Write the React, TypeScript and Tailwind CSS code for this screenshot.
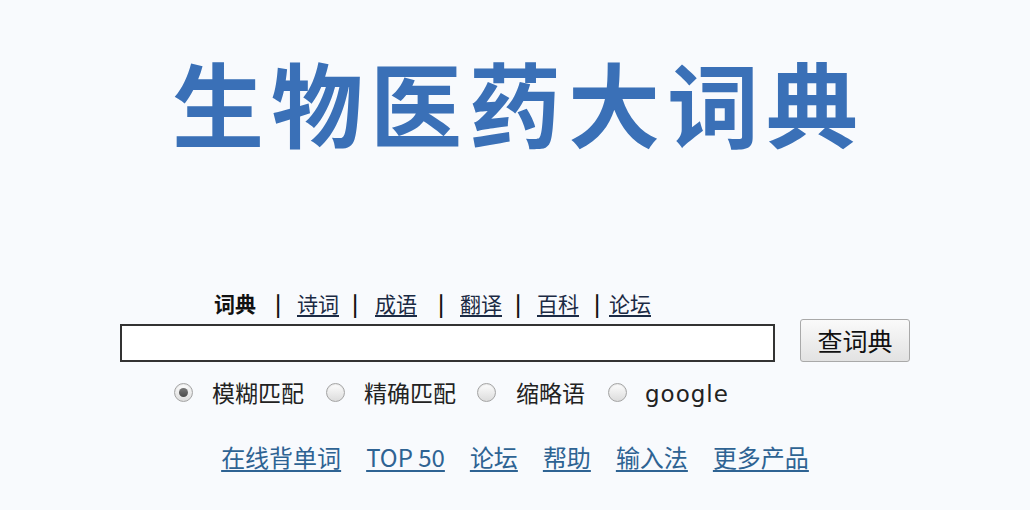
import React from "react";

const cjk = { fontFamily: '"Noto Sans CJK SC", "Noto Sans", sans-serif' };

function Radio({ checked }: { checked?: boolean }) {
  return (
    <span className="flex h-[19px] w-[19px] shrink-0 items-center justify-center rounded-full border border-[#a4a4a4] bg-gradient-to-b from-[#fdfdfd] to-[#dcdcdc] shadow-[inset_0_1px_1px_rgba(0,0,0,0.08)]">
      {checked && (
        <span className="h-[9px] w-[9px] rounded-full bg-gradient-to-b from-[#777] to-[#4a4a4a]" />
      )}
    </span>
  );
}

export default function App() {
  return (
    <div className="min-h-[510px] w-full bg-[#f8fafd] text-[#111]" style={cjk}>
      <div className="mx-auto flex w-[790px] flex-col">
        <div className="mt-[54px] flex h-[94px] items-center justify-center">
          <h1 className="pl-[7px] text-[92px] font-bold leading-[94px] tracking-[7px] text-[#3a70b7]">
            生物医药大词典
          </h1>
        </div>

        <div className="mt-[141px] flex h-[28px] items-center pl-[94px] text-[21px] leading-[28px]">
          <span className="font-bold text-[#111]">词典</span>
          <span className="ml-[12px] w-[20px] text-center font-bold text-[#111]">|</span>
          <a className="ml-[9px] text-[#1b2a44] underline underline-offset-[3px]">诗词</a>
          <span className="ml-[6px] w-[20px] text-center font-bold text-[#111]">|</span>
          <a className="ml-[10px] text-[#1b2a44] underline underline-offset-[3px]">成语</a>
          <span className="ml-[14px] w-[20px] text-center font-bold text-[#111]">|</span>
          <a className="ml-[9px] text-[#1b2a44] underline underline-offset-[3px]">翻译</a>
          <span className="ml-[6px] w-[20px] text-center font-bold text-[#111]">|</span>
          <a className="ml-[9px] text-[#1b2a44] underline underline-offset-[3px]">百科</a>
          <span className="ml-[8px] w-[20px] text-center font-bold text-[#111]">|</span>
          <a className="ml-[2px] text-[#1b2a44] underline underline-offset-[3px]">论坛</a>
        </div>

        <div className="mt-[2px] flex items-end">
          <input
            type="text"
            className="h-[38px] w-[655px] border-2 border-[#333] bg-white outline-none"
          />
          <button className="ml-[25px] h-[43px] w-[110px] rounded-[3px] border border-[#a9a9a9] bg-gradient-to-b from-[#fafafa] to-[#e2e2e2] text-[25px] leading-[41px] text-[#111]">
            查词典
          </button>
        </div>

        <div className="mt-[16px] flex h-[28px] items-center pl-[54px] text-[23px] leading-[28px] text-[#222]">
          <Radio checked />
          <span className="ml-[19px]">模糊匹配</span>
          <span className="ml-[22px]"><Radio /></span>
          <span className="ml-[19px]">精确匹配</span>
          <span className="ml-[21px]"><Radio /></span>
          <span className="ml-[20px]">缩略语</span>
          <span className="ml-[23px]"><Radio /></span>
          <span className="ml-[18px] mt-[4px] tracking-[1px]" style={{ fontFamily: '"DejaVu Sans", "Noto Sans", sans-serif' }}>google</span>
        </div>

        <div className="mt-[37px] flex h-[28px] items-center justify-center gap-[25px] text-[24px] leading-[28px] text-[#2e6393]">
          <a className="underline underline-offset-[3px]">在线背单词</a>
          <a className="underline underline-offset-[3px]">TOP 50</a>
          <a className="underline underline-offset-[3px]">论坛</a>
          <a className="underline underline-offset-[3px]">帮助</a>
          <a className="underline underline-offset-[3px]">输入法</a>
          <a className="underline underline-offset-[3px]">更多产品</a>
        </div>
      </div>
    </div>
  );
}
